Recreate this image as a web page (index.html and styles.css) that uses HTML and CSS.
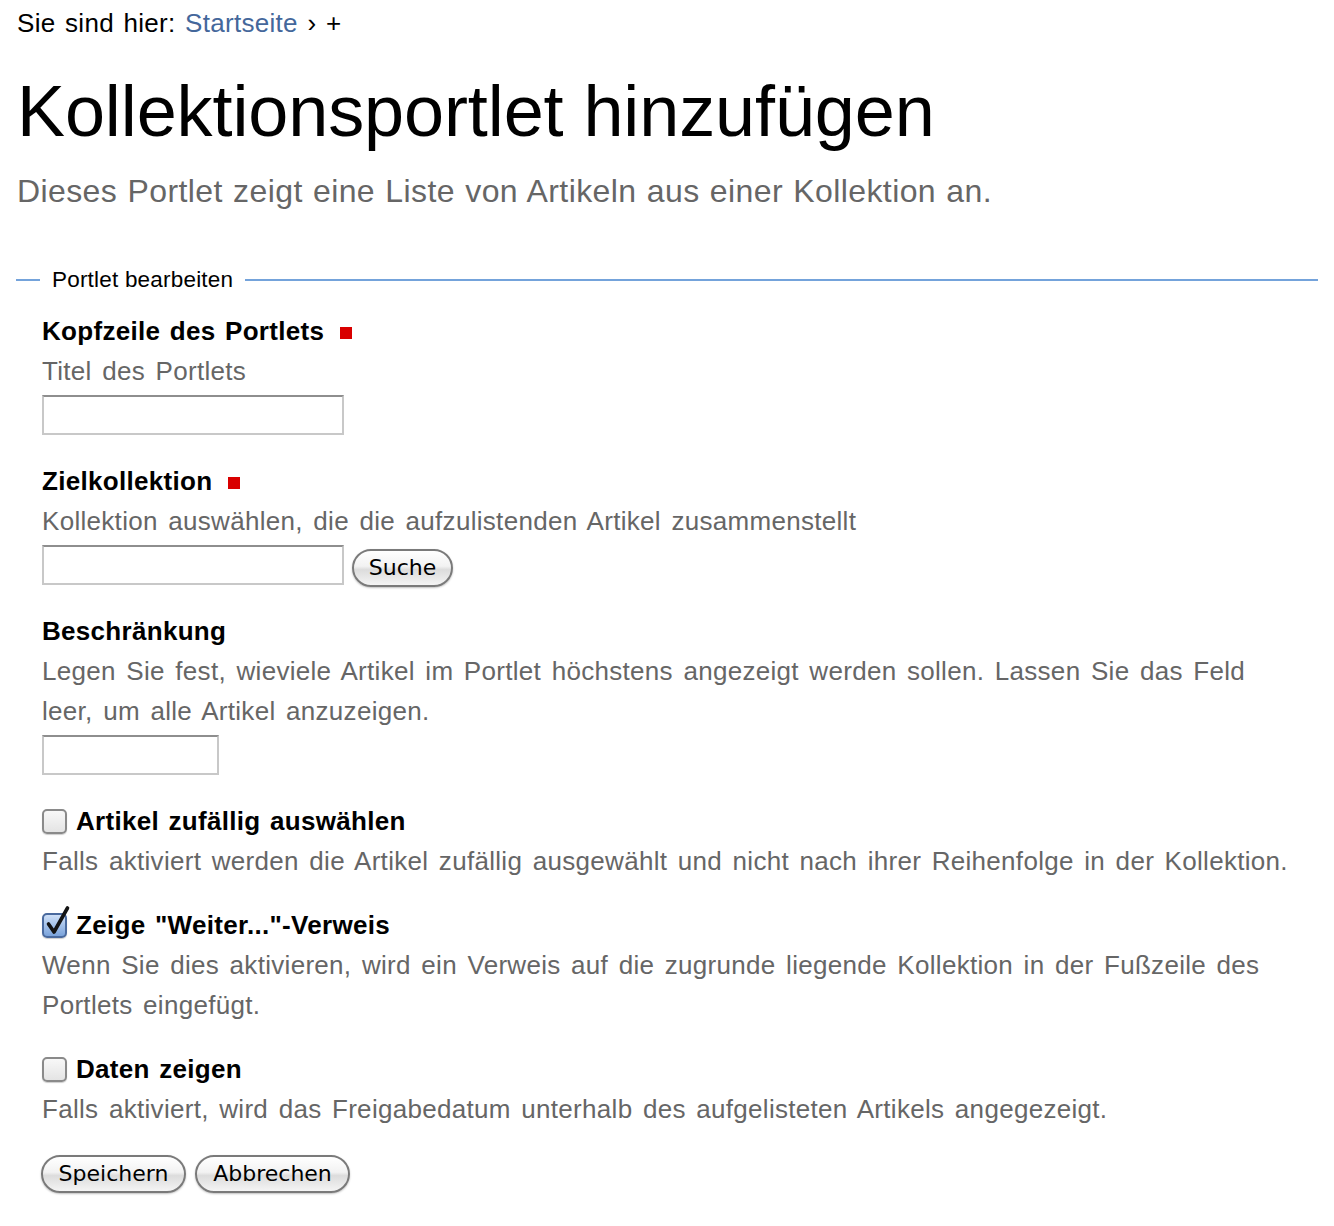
FILE: index.html
```html
<!DOCTYPE html>
<html lang="de">
<head>
<meta charset="utf-8">
<title>Kollektionsportlet hinzufügen</title>
<link rel="stylesheet" href="styles.css">
</head>
<body>
<div class="page">
  <div class="breadcrumbs">Sie sind hier: <a href="#" class="crumb-link">Startseite</a> <span class="sep">›</span> +</div>
  <h1 class="title">Kollektionsportlet hinzufügen</h1>
  <p class="lead">Dieses Portlet zeigt eine Liste von Artikeln aus einer Kollektion an.</p>

  <form class="form">
    <fieldset class="fs">
      <legend class="fs-legend">Portlet bearbeiten</legend>

      <div class="field">
        <label class="field-label">Kopfzeile des Portlets <span class="required"></span></label>
        <div class="help">Titel des Portlets</div>
        <input type="text" class="text-input wide">
      </div>

      <div class="field">
        <label class="field-label">Zielkollektion <span class="required"></span></label>
        <div class="help">Kollektion auswählen, die die aufzulistenden Artikel zusammenstellt</div>
        <div class="search-row">
          <input type="text" class="text-input wide">
          <button type="button" class="aqua-btn search-btn">Suche</button>
        </div>
      </div>

      <div class="field">
        <label class="field-label">Beschränkung</label>
        <div class="help">Legen Sie fest, wieviele Artikel im Portlet höchstens angezeigt werden sollen. Lassen Sie das Feld leer, um alle Artikel anzuzeigen.</div>
        <input type="text" class="text-input narrow">
      </div>

      <div class="field check-field">
        <div class="check-row">
          <span class="checkbox"></span>
          <label class="field-label">Artikel zufällig auswählen</label>
        </div>
        <div class="help">Falls aktiviert werden die Artikel zufällig ausgewählt und nicht nach ihrer Reihenfolge in der Kollektion.</div>
      </div>

      <div class="field check-field">
        <div class="check-row">
          <span class="checkbox checked">
            <svg class="tick" viewBox="0 0 28 32" width="28" height="32"><path d="M5.5 19 L11 27 L24.5 3" fill="none" stroke="#141414" stroke-width="3.6" stroke-linecap="round" stroke-linejoin="round"/></svg>
          </span>
          <label class="field-label">Zeige "Weiter..."-Verweis</label>
        </div>
        <div class="help">Wenn Sie dies aktivieren, wird ein Verweis auf die zugrunde liegende Kollektion in der Fußzeile des Portlets eingefügt.</div>
      </div>

      <div class="field check-field">
        <div class="check-row">
          <span class="checkbox"></span>
          <label class="field-label">Daten zeigen</label>
        </div>
        <div class="help">Falls aktiviert, wird das Freigabedatum unterhalb des aufgelisteten Artikels angegezeigt.</div>
      </div>

      <div class="actions">
        <button type="button" class="aqua-btn save-btn">Speichern</button>
        <button type="button" class="aqua-btn cancel-btn">Abbrechen</button>
      </div>
    </fieldset>
  </form>
</div>
</body>
</html>
```
FILE: styles.css
```css
html, body {
  margin: 0;
  padding: 0;
  background: #fff;
}
body {
  font-family: "Liberation Sans", Arial, Helvetica, sans-serif;
  color: #000;
}
.page {
  padding: 0 16px 0 17px;
}
.breadcrumbs {
  font-size: 26px;
  line-height: 40px;
  padding-top: 3px;
  letter-spacing: 0.3px;
  word-spacing: 2px;
  color: #000;
}
.crumb-link {
  color: #44679b;
  text-decoration: none;
}
.title {
  margin: 26px 0 0 0;
  font-size: 72px;
  font-weight: normal;
  line-height: 84px;
  letter-spacing: -0.1px;
}
.lead {
  margin: 3px 0 0 0;
  font-size: 32px;
  line-height: 70px;
  letter-spacing: 0.4px;
  word-spacing: 1px;
  color: #666;
}
.form {
  margin: 34px 0 0 0;
}
.fs {
  margin: 0 0 0 -1px;
  padding: 11px 16px 20px 26px;
  border: none;
  border-top: 2px solid #74a3db;
  min-width: 0;
}
.fs-legend {
  margin-left: -2px;
  padding: 0 12px;
  font-size: 22.5px;
  line-height: 40px;
  letter-spacing: 0.2px;
  color: #000;
}
.field {
  margin-bottom: 26px;
}
.field-label {
  display: inline-block;
  font-size: 26px;
  font-weight: bold;
  line-height: 40px;
  letter-spacing: 0.3px;
  word-spacing: 2px;
}
.required {
  display: inline-block;
  width: 12px;
  height: 12px;
  background: #d90000;
  margin-left: 6px;
  vertical-align: 1px;
}
.help {
  font-size: 26px;
  line-height: 40px;
  letter-spacing: 0.3px;
  word-spacing: 3px;
  color: #666;
}
.text-input {
  display: block;
  box-sizing: border-box;
  height: 40px;
  margin-top: 4px;
  border: 2px solid #c8c8c8;
  border-top-color: #8e8e8e;
  background: #fff;
  padding: 0 6px;
  font-size: 22px;
}
.wide {
  width: 302px;
}
.narrow {
  width: 177px;
}
.search-row {
  display: flex;
  align-items: flex-start;
  gap: 8px;
}
.aqua-btn {
  box-sizing: border-box;
  height: 38px;
  border: 2px solid #7a7a7a;
  border-radius: 19px;
  background: linear-gradient(#ffffff 0%, #f2f2f2 45%, #dcdcdc 55%, #f4f4f4 100%);
  box-shadow: 0 1px 2px rgba(0,0,0,0.25);
  font-family: "DejaVu Sans", "Lucida Grande", sans-serif;
  font-size: 22px;
  color: #000;
  padding: 0 14px;
  line-height: 32px;
}
.search-btn {
  margin-top: 8px;
  margin-bottom: -2px;
  width: 101px;
}
.check-row {
  display: flex;
  align-items: center;
  gap: 9px;
}
.checkbox {
  position: relative;
  box-sizing: border-box;
  width: 25px;
  height: 25px;
  border: 2px solid #8a8a8a;
  border-radius: 5px;
  background: linear-gradient(#f8f8f8, #e4e4e4);
  box-shadow: 0 1px 1px rgba(0,0,0,0.2);
  flex: none;
}
.checkbox.checked {
  border-color: #4a6a9e;
  background: linear-gradient(#cfe0f7, #7aa3db);
}
.tick {
  position: absolute;
  left: -1px;
  top: -10px;
}
.check-field {
  margin-bottom: 24px;
}
.actions {
  display: flex;
  gap: 9px;
  margin-top: 26px;
  margin-left: -1px;
}
.save-btn {
  width: 145px;
}
.cancel-btn {
  width: 155px;
}
```
